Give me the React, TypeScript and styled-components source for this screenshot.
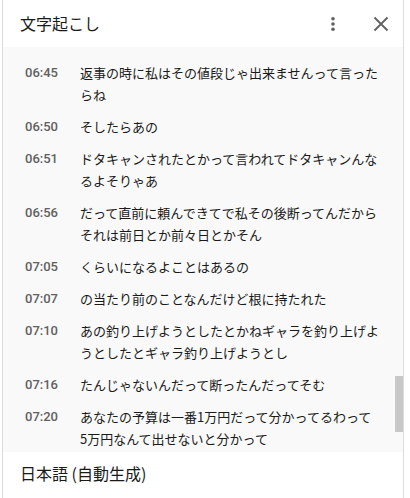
import React from "react";
import styled, { createGlobalStyle } from "styled-components";

const Global = createGlobalStyle`
  html, body { margin: 0; padding: 0; background: #fff; }
  body { font-family: Roboto, "Noto Sans CJK JP", sans-serif; }
`;

const Panel = styled.div`
  position: relative;
  margin-left: 2px;
  width: 400px;
  height: 498px;
  border-left: 1px solid #dcdcdc;
  border-right: 1px solid #dcdcdc;
  display: flex;
  flex-direction: column;
  background: #fff;
  overflow: hidden;
`;

const Header = styled.div`
  height: 47px;
  flex: none;
  display: flex;
  align-items: center;
  padding-left: 17px;
  padding-right: 6px;
`;

const Title = styled.div`
  flex: 1;
  font-family: "Noto Sans CJK JP", sans-serif;
  font-size: 16px;
  color: #1a1a1a;
  line-height: 20px;
  margin-top: -2px;
`;

const IconButton = styled.button<{ $gap?: number }>`
  border: 0;
  background: transparent;
  padding: 0;
  width: 32px;
  height: 32px;
  display: flex;
  align-items: center;
  justify-content: center;
  margin-left: ${(p) => p.$gap ?? 0}px;
`;

const Body = styled.div`
  position: relative;
  height: 405px;
  flex: none;
  background: #f9f9f9;
  padding-top: 10px;
  box-sizing: border-box;
  overflow: hidden;
`;

const Row = styled.div`
  display: flex;
  padding: 5px 0 5px 22px;
`;

const Time = styled.div`
  width: 55px;
  flex: none;
  font-family: Roboto, sans-serif;
  font-weight: 500;
  font-size: 13px;
  color: #606060;
  line-height: 22px;
`;

const Text = styled.div`
  width: 310px;
  font-family: "Noto Sans CJK JP", sans-serif;
  font-size: 13px;
  color: #1a1a1a;
  line-height: 22px;
`;

const Line = styled.span`
  display: block;
  white-space: nowrap;
`;

const Thumb = styled.div`
  position: absolute;
  right: 0;
  top: 329px;
  width: 8px;
  height: 56px;
  background: #c8c8c8;
`;

const Footer = styled.div`
  flex: 1;
  display: flex;
  align-items: flex-start;
  padding: 11px 0 0 17px;
  font-family: "Noto Sans CJK JP", sans-serif;
  font-size: 16px;
  color: #1a1a1a;
  line-height: 20px;
`;

const rows: [string, string[]][] = [
  ["06:45", ["返事の時に私はその値段じゃ出来ませんって言った", "らね"]],
  ["06:50", ["そしたらあの"]],
  ["06:51", ["ドタキャンされたとかって言われてドタキャンんな", "るよそりゃあ"]],
  ["06:56", ["だって直前に頼んできてで私その後断ってんだから", "それは前日とか前々日とかそん"]],
  ["07:05", ["くらいになるよことはあるの"]],
  ["07:07", ["の当たり前のことなんだけど根に持たれた"]],
  ["07:10", ["あの釣り上げようとしたとかねギャラを釣り上げよ", "うとしたとギャラ釣り上げようとし"]],
  ["07:16", ["たんじゃないんだって断ったんだってそむ"]],
  ["07:20", ["あなたの予算は一番1万円だって分かってるわって", "5万円なんて出せないと分かって"]],
];

export default function App() {
  return (
    <>
      <Global />
      <Panel>
        <Header>
          <Title>文字起こし</Title>
          <IconButton aria-label="menu">
            <svg width="16" height="16" viewBox="0 0 16 16">
              <circle cx="8" cy="2.8" r="1.8" fill="#606060" />
              <circle cx="8" cy="8" r="1.8" fill="#606060" />
              <circle cx="8" cy="13.2" r="1.8" fill="#606060" />
            </svg>
          </IconButton>
          <IconButton aria-label="close" $gap={16}>
            <svg width="16" height="16" viewBox="0 0 16 16">
              <path d="M1.5 1.5 L14.5 14.5 M14.5 1.5 L1.5 14.5" stroke="#606060" strokeWidth="1.8" />
            </svg>
          </IconButton>
        </Header>
        <Body>
          {rows.map(([t, lines]) => (
            <Row key={t}>
              <Time>{t}</Time>
              <Text>
                {lines.map((l) => (
                  <Line key={l}>{l}</Line>
                ))}
              </Text>
            </Row>
          ))}
          <Thumb />
        </Body>
        <Footer>日本語 (自動生成)</Footer>
      </Panel>
    </>
  );
}
